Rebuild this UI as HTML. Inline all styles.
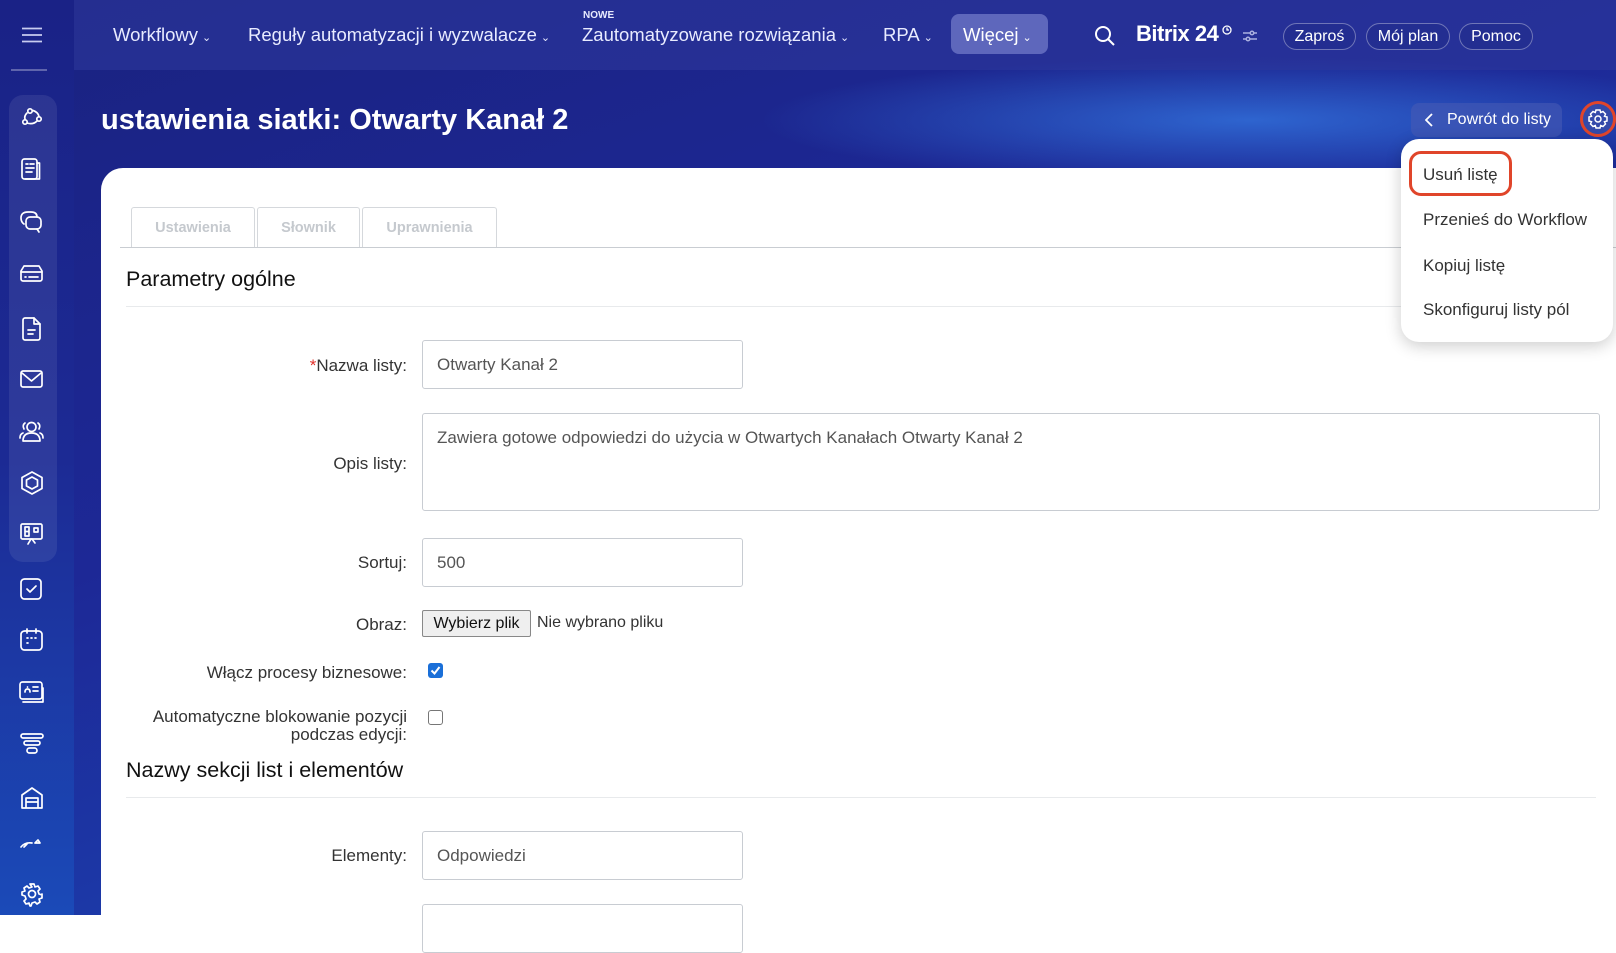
<!DOCTYPE html>
<html><head><meta charset="utf-8"><style>
*{box-sizing:border-box;margin:0;padding:0}
html{background:#fff}
body{width:1616px;height:915px;overflow:hidden;position:relative;font-family:"Liberation Sans",sans-serif;background:#14207a}
.bg{position:absolute;inset:0;background:
radial-gradient(ellipse 700px 90px at 1250px 120px,rgba(60,150,255,.55),transparent 70%),
linear-gradient(160deg,#1a2280 0%,#1d2896 40%,#1c3dac 70%,#1f55c8 100%)}
.side{position:absolute;left:0;top:0;width:74px;height:915px;background:linear-gradient(180deg,#1a2286 0%,#1c2a94 50%,#1b4ab8 100%)}
.top{position:absolute;left:74px;top:0;right:0;height:70px;background:rgba(45,55,155,.6)}
.nav{position:absolute;top:24px;color:#e8ebff;font-size:18.5px;white-space:nowrap}
.nav .c{font-size:11px;margin-left:4px}
.pill{position:absolute;top:23px;height:27px;border:1px solid rgba(255,255,255,.35);border-radius:14px;color:#fff;font-size:16px;line-height:25px;text-align:center;background:rgba(30,40,130,.3)}
.panel{position:absolute;left:9px;top:95px;width:48px;height:467px;border-radius:14px;background:rgba(255,255,255,.08)}
.card{position:absolute;left:101px;top:168px;right:0;bottom:0;background:#fff;border-top-left-radius:22px}
.lbl{position:absolute;right:1209px;font-size:17px;color:#333;text-align:right;white-space:nowrap;line-height:18px}
.inp{position:absolute;left:422px;width:321px;height:49px;border:1px solid #c8ccd2;border-radius:3px;font-size:17px;color:#555;padding:14px 0 0 14px}
.tab{position:absolute;top:207px;height:41px;border:1px solid #d5d8dc;border-bottom:none;border-radius:3px 3px 0 0;color:#c5c9ce;font-size:14.5px;font-weight:bold;text-align:center;line-height:40px}
h2{position:absolute;left:126px;font-weight:normal;font-size:21.5px;color:#111}
.menu div{position:absolute;left:22px;font-size:17px;color:#333;white-space:nowrap}
</style></head><body>
<div class="bg"></div>
<div class="side"></div>
<div class="top"></div>
<svg style="position:absolute;left:22px;top:27px" width="20" height="16"><path d="M0 1.5H20M0 8H20M0 14.5H20" stroke="#c8ccf0" stroke-width="1.8"/></svg>
<div style="position:absolute;left:11px;top:69px;width:36px;height:2px;background:rgba(255,255,255,.3)"></div>
<div class="panel"></div>
<svg width="74" height="915" style="position:absolute;left:0;top:0" fill="none" stroke="#fff" stroke-width="1.7" stroke-linecap="round" stroke-linejoin="round">
<g transform="translate(22,108)"><circle cx="8" cy="3" r="2.2"/><circle cx="3" cy="14" r="2.2"/><circle cx="17" cy="11" r="2.2"/><path d="M5 5Q2 8 3 11M11 2.5Q16 4 17 8.5M5 15Q11 17 15 13"/></g>
<g transform="translate(22,159)"><rect x="0" y="0" width="15" height="20" rx="2.5"/><path d="M15 4h2.5v16h-14M4 5h2M8 5h4M4 9h8M4 13h6"/></g>
<g transform="translate(21,211)"><path d="M3 13Q0 11 0 7Q0 1 7 1h3Q16 1 16 6"/><rect x="5" y="6" width="15" height="12" rx="4"/><path d="M16 18l2 3"/></g>
<g transform="translate(21,266)"><path d="M3 0h15l3 5v8a2 2 0 0 1-2 2H2a2 2 0 0 1-2-2V5z"/><path d="M0 6h21M4 11h1M8 11h9"/></g>
<g transform="translate(23,318)"><path d="M2 0h9l6 6v14a2 2 0 0 1-2 2H2a2 2 0 0 1-2-2V2a2 2 0 0 1 2-2z"/><path d="M11 0v6h6M5 12h7M5 16h5"/></g>
<g transform="translate(21,371)"><rect x="0" y="0" width="21" height="16" rx="2"/><path d="M1 2l9.5 8L20 2"/></g>
<g transform="translate(20,421)"><circle cx="11.5" cy="6" r="4.5"/><path d="M3 20Q3 12 11.5 12Q20 12 20 20zM5 2Q2 4 4 8M18 2Q21 4 19 8M0 17Q0 13 3 12M23 17Q23 13 20 12"/></g>
<g transform="translate(21,472)"><path d="M11 0l10 5.5v11L11 22 1 16.5v-11z"/><path d="M11 5l5.5 3v6L11 17l-5.5-3V8z"/></g>
<g transform="translate(21,524)"><rect x="0" y="0" width="21" height="15" rx="1.5"/><path d="M4 3h4v9H4zM4 7.5h4M13 4h4v4h-4zM10 15l-3 5M11 15l3 4"/></g>
<g transform="translate(21,579)"><rect x="0" y="0" width="20" height="20" rx="3.5"/><path d="M6 10l3 3 6-6"/></g>
<g transform="translate(21,629)"><rect x="0" y="2" width="21" height="19" rx="3.5"/><path d="M6 0v4M15 0v4M6 9h1M10 9h1M14 9h1M6 14h1"/></g>
<g transform="translate(20,682)"><rect x="0" y="0" width="22" height="17" rx="2.5"/><path d="M3 20h20v-14M5 10Q5 7 7.5 7Q10 7 10 10M7.5 5v.1M13 5h5M13 9h5"/></g>
<g transform="translate(21,734)"><rect x="0" y="0" width="22" height="4" rx="2"/><rect x="3" y="7" width="16" height="4" rx="2"/><rect x="6" y="14" width="10" height="5" rx="2.5"/></g>
<g transform="translate(22,788)"><path d="M0 20V7L10 0l10 7v13zM4 20V10h12v10M4 14h12"/></g>
<g transform="translate(21,840)"><path d="M0 7Q4 2 11 3M3 7l3-3M14 3h5l-2-3z"/></g>
<g transform="translate(21,883)"><circle cx="11" cy="11" r="3.5"/><path d="M9 1h4l1 3 3-1 2 3-2 2 1 3 3 1v-1 4l-3 1 1 3-3 2-2-2-3 1-1 3H9l-1-3-3 1-2-3 2-2-1-3-3-1V9l3-1-1-3 3-2 2 2 3-1z"/></g>
</svg>

<div class="nav" style="left:113px">Workflowy<span class="c">&#8964;</span></div>
<div class="nav" style="left:248px">Reguły automatyzacji i wyzwalacze<span class="c">&#8964;</span></div>
<div style="position:absolute;left:583px;top:10px;color:#e8ebff;font-size:10px;font-weight:bold">NOWE</div>
<div class="nav" style="left:582px">Zautomatyzowane rozwiązania<span class="c">&#8964;</span></div>
<div class="nav" style="left:883px">RPA<span class="c">&#8964;</span></div>
<div style="position:absolute;left:951px;top:14px;width:97px;height:40px;border-radius:8px;background:rgba(140,150,220,.55)"></div>
<div class="nav" style="left:963px;color:#fff">Więcej<span class="c">&#8964;</span></div>
<svg style="position:absolute;left:1094px;top:25px" width="22" height="22" fill="none" stroke="#fff" stroke-width="2"><circle cx="9" cy="9" r="7"/><path d="M14 14l6 6"/></svg>
<div style="position:absolute;left:1136px;top:21px;color:#fff;font-size:22px;font-weight:bold;letter-spacing:-.5px">Bitrix 24</div>
<svg style="position:absolute;left:1222px;top:25px" width="10" height="10" fill="none" stroke="#fff" stroke-width="1.3"><circle cx="5" cy="5" r="4"/><path d="M5 2.5V5h2"/></svg>
<svg style="position:absolute;left:1243px;top:30px" width="14" height="12" fill="none" stroke="#aab0e0" stroke-width="1.5"><path d="M0 3h14M0 9h14"/><circle cx="9" cy="3" r="1.8" fill="#2a3490"/><circle cx="5" cy="9" r="1.8" fill="#2a3490"/></svg>
<div class="pill" style="left:1283px;width:73px">Zaproś</div>
<div class="pill" style="left:1366px;width:84px">Mój plan</div>
<div class="pill" style="left:1459px;width:74px">Pomoc</div>

<div style="position:absolute;left:101px;top:104px;color:#fff;font-size:29px;font-weight:bold">ustawienia siatki: Otwarty Kanał 2</div>
<div style="position:absolute;left:1411px;top:103px;width:151px;height:34px;border-radius:8px;background:rgba(70,90,180,.6);color:#fff;font-size:16px;line-height:34px;padding-left:36px">Powrót do listy</div>
<svg style="position:absolute;left:1425px;top:113px" width="8" height="14" fill="none" stroke="#fff" stroke-width="1.8"><path d="M7 1L1 7l6 6"/></svg>
<div style="position:absolute;left:1580px;top:101px;width:36px;height:36px;border-radius:50%;border:3px solid #e0452a;background:rgba(60,80,170,.7)"></div>
<svg style="position:absolute;left:1588px;top:109px" width="20" height="20" fill="none" stroke="#fff" stroke-width="1.5"><circle cx="10" cy="10" r="3"/><path d="M8 1h4l.7 2.5 2.3-1 2.5 2.5-1 2.3L19 8v4l-2.5.7 1 2.3-2.5 2.5-2.3-1L12 19H8l-.7-2.5-2.3 1L2.5 15l1-2.3L1 12V8l2.5-.7-1-2.3L5 2.5l2.3 1z"/></svg>

<div class="card"></div>
<div class="tab" style="left:131px;width:124px">Ustawienia</div>
<div class="tab" style="left:257px;width:103px">Słownik</div>
<div class="tab" style="left:362px;width:135px">Uprawnienia</div>
<div style="position:absolute;left:120px;top:247px;right:0;height:1px;background:#c9cdd2"></div>
<h2 style="top:267px">Parametry ogólne</h2>
<div style="position:absolute;left:126px;top:306px;right:20px;height:1px;background:#e8eaec"></div>

<div class="lbl" style="top:357px"><span style="color:#e0302a">*</span>Nazwa listy:</div>
<div class="inp" style="top:340px">Otwarty Kanał 2</div>
<div class="lbl" style="top:455px">Opis listy:</div>
<div class="inp" style="top:413px;width:1178px;height:98px">Zawiera gotowe odpowiedzi do użycia w Otwartych Kanałach Otwarty Kanał 2</div>
<div class="lbl" style="top:554px">Sortuj:</div>
<div class="inp" style="top:538px">500</div>
<div class="lbl" style="top:616px">Obraz:</div>
<div style="position:absolute;left:422px;top:610px;width:109px;height:27px;border:1px solid #888;border-radius:2px;background:#efefef;font-size:16px;line-height:25px;text-align:center;color:#111">Wybierz plik</div>
<div style="position:absolute;left:537px;top:614px;font-size:16px;color:#333">Nie wybrano pliku</div>
<div class="lbl" style="top:664px">Włącz procesy biznesowe:</div>
<div style="position:absolute;left:428px;top:663px;width:15px;height:15px;border-radius:3px;background:#1a6fd8"></div>
<svg style="position:absolute;left:430px;top:665px" width="11" height="11" fill="none" stroke="#fff" stroke-width="2"><path d="M1.5 5.5l3 3 5-6.5"/></svg>
<div class="lbl" style="top:708px">Automatyczne blokowanie pozycji<br>podczas edycji:</div>
<div style="position:absolute;left:428px;top:710px;width:15px;height:15px;border-radius:3px;border:1.5px solid #767676;background:#fff"></div>
<h2 style="top:758px">Nazwy sekcji list i elementów</h2>
<div style="position:absolute;left:126px;top:797px;right:20px;height:1px;background:#e8eaec"></div>
<div class="lbl" style="top:847px">Elementy:</div>
<div class="inp" style="top:831px">Odpowiedzi</div>
<div class="inp" style="top:904px"></div>

<div class="menu" style="position:absolute;left:1401px;top:139px;width:212px;height:203px;background:#fff;border-radius:18px;box-shadow:0 4px 16px rgba(0,0,0,.2)">
<div style="top:26px">Usuń listę</div>
<div style="top:71px">Przenieś do Workflow</div>
<div style="top:117px">Kopiuj listę</div>
<div style="top:161px">Skonfiguruj listy pól</div>
</div>
<div style="position:absolute;left:1409px;top:151px;width:103px;height:45px;border:3px solid #e0452a;border-radius:12px"></div>
</body></html>
